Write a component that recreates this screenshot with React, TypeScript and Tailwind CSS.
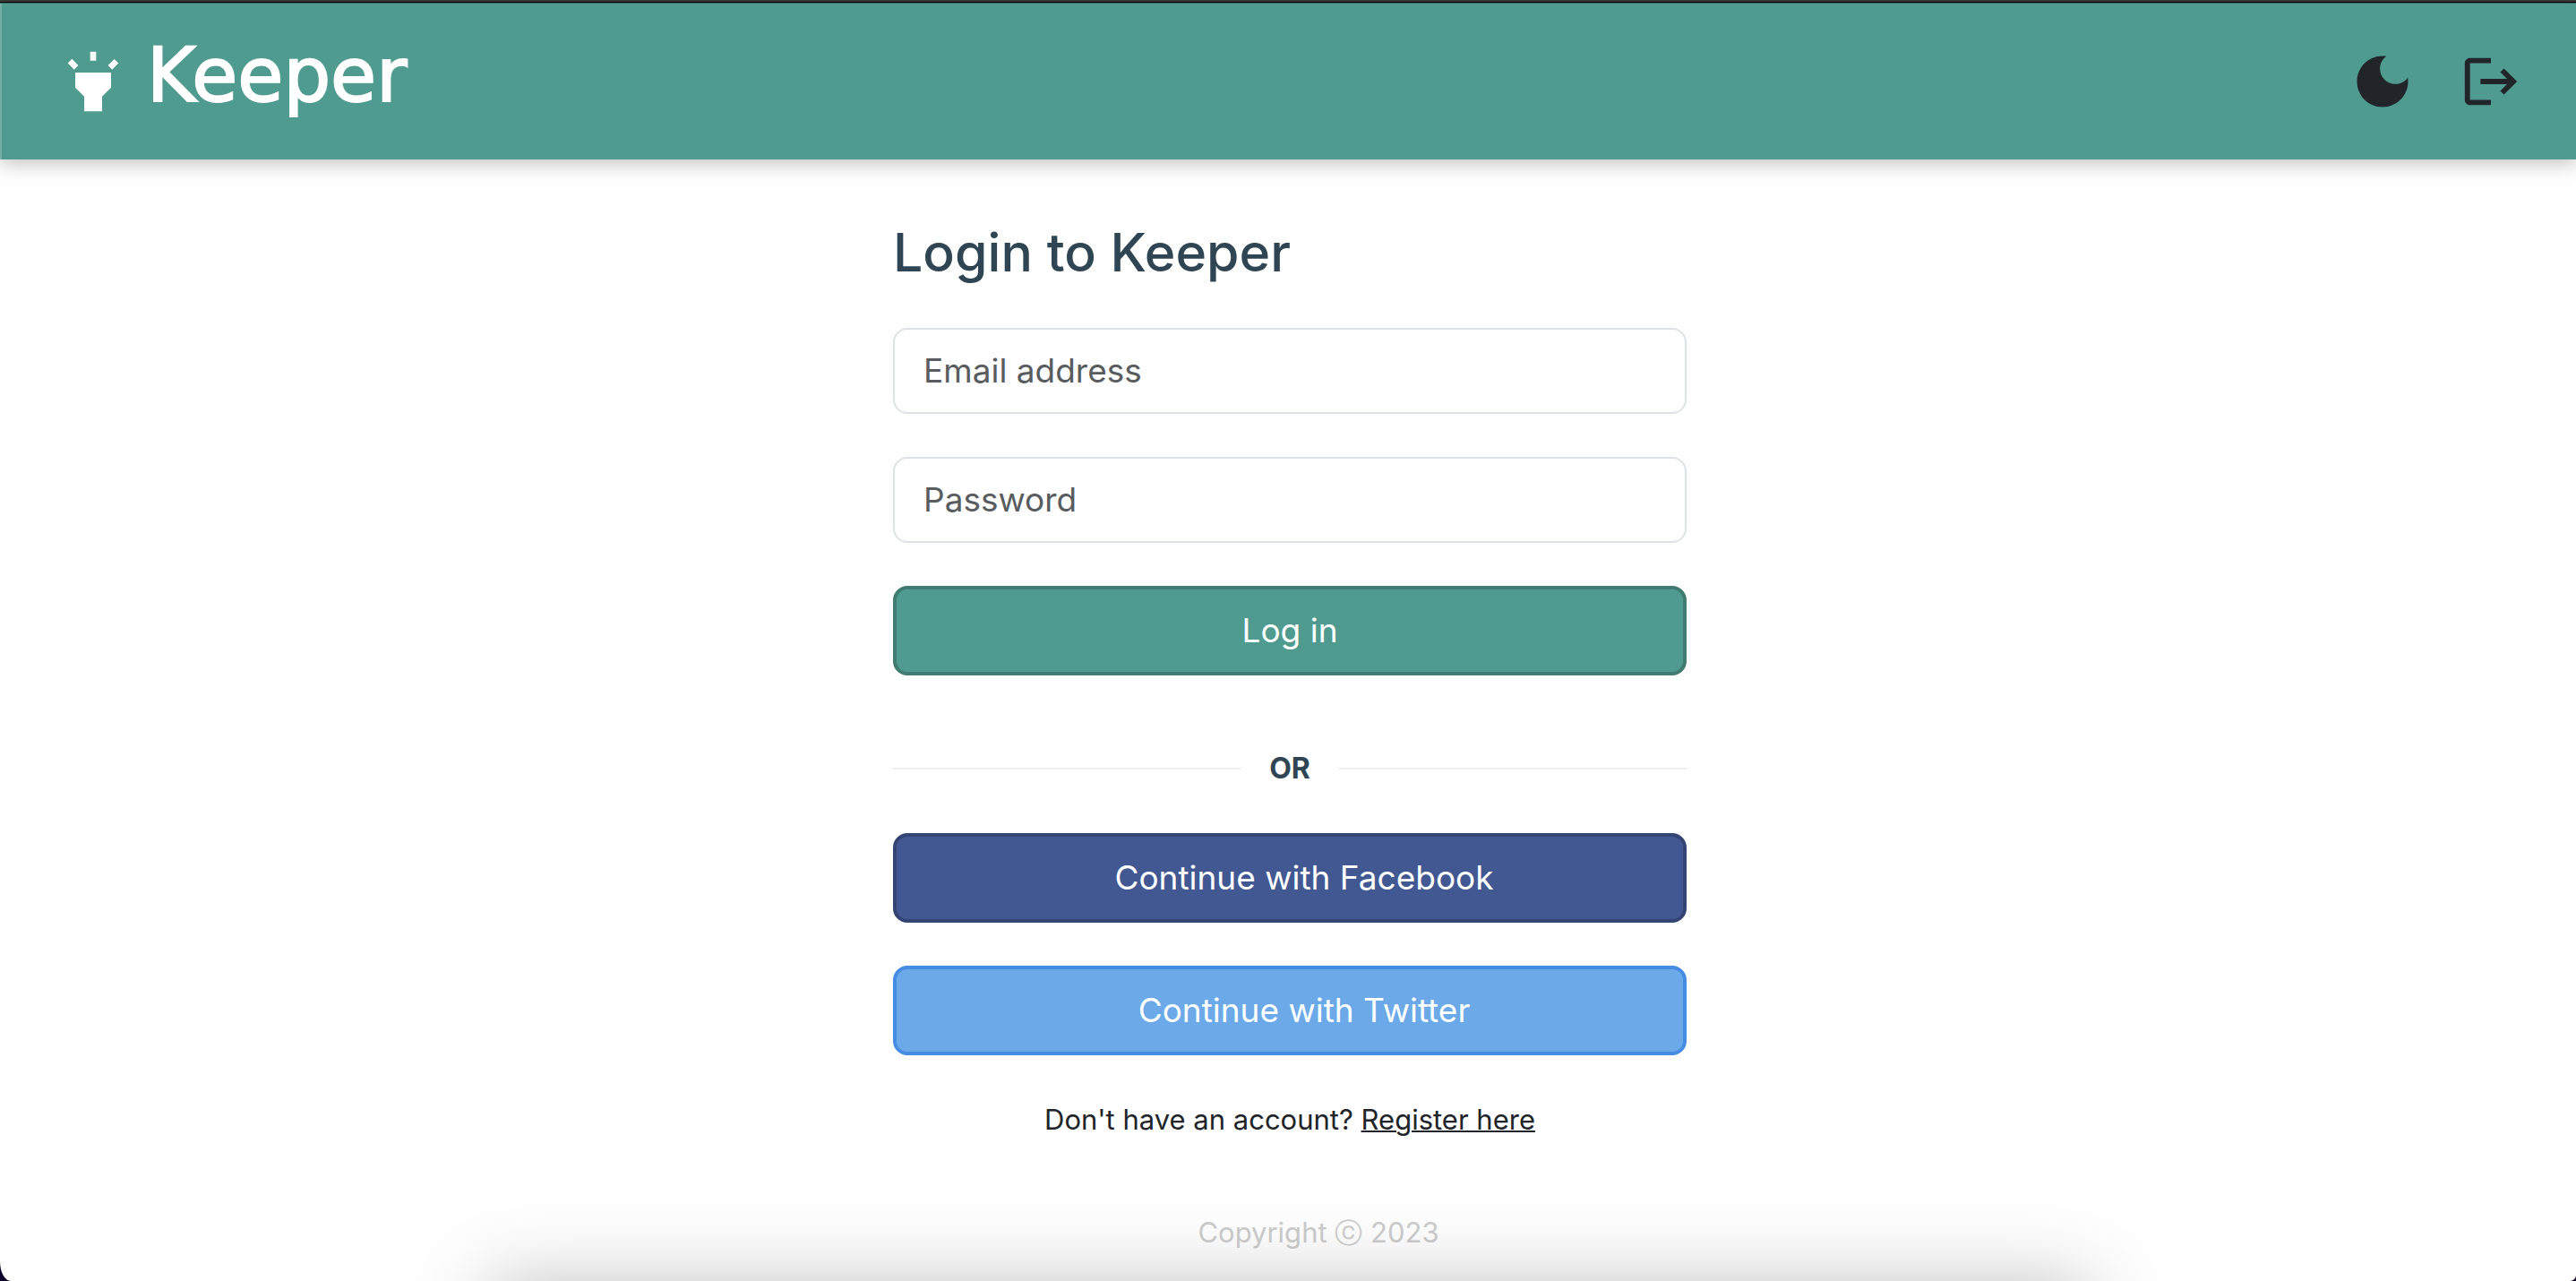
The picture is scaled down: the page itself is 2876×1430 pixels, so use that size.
import React from "react";

type IconProps = { className?: string; path: string };

function Icon({ className, path }: IconProps) {
  return (
    <svg viewBox="0 0 24 24" fill="currentColor" aria-hidden="true" className={className}>
      <path d={path} />
    </svg>
  );
}

const HIGHLIGHT =
  "m6 14 3 3v5h6v-5l3-3V9H6zm5-12h2v3h-2zM3.5 5.875 4.914 4.46l2.12 2.122L5.62 7.997zm13.46.71 2.123-2.12 1.414 1.414L18.375 8z";
const MOON =
  "M12 3c-4.97 0-9 4.03-9 9s4.03 9 9 9 9-4.03 9-9c0-.46-.04-.92-.1-1.36-.98 1.37-2.58 2.26-4.4 2.26-2.98 0-5.4-2.42-5.4-5.4 0-1.81.89-3.42 2.26-4.4-.44-.06-.9-.1-1.36-.1z";
const LOGOUT =
  "m17 7-1.41 1.41L18.17 11H8v2h10.17l-2.58 2.58L17 17l5-5zM4 5h8V3H4c-1.1 0-2 .9-2 2v14c0 1.1.9 2 2 2h8v-2H4z";

function Header() {
  return (
    <header className="flex h-[174px] items-center justify-between border-l-2 border-white/20 bg-[#509b8f] pr-[60px] pl-[62px] shadow-[0_4px_20px_rgba(0,0,0,0.25)]">
      <a href="#home" className="flex items-center gap-5 text-white">
        <Icon path={HIGHLIGHT} className="size-20" />
        <span className="pb-3 font-['DejaVu_Sans',sans-serif] text-[83px] leading-[96px] [-webkit-text-stroke:2px_white]">
          Keeper
        </span>
      </a>
      <div className="flex items-center gap-12 text-[#212529]">
        <button type="button" aria-label="Dark mode">
          <Icon path={MOON} className="size-[76px]" />
        </button>
        <button type="button" aria-label="Log out">
          <Icon path={LOGOUT} className="size-[70px]" />
        </button>
      </div>
    </header>
  );
}

function TextField({ id, type, label }: { id: string; type: string; label: string }) {
  return (
    <div className="relative mb-12">
      <input
        id={id}
        type={type}
        placeholder=" "
        className="peer block h-24 w-full rounded-2xl border-2 border-[#dee2e6] bg-[#fefefe] px-8 text-[37px]"
      />
      <label
        htmlFor={id}
        className="pointer-events-none absolute inset-y-0 left-[34px] hidden items-center text-[37px] text-[#595c5f] peer-placeholder-shown:flex"
      >
        {label}
      </label>
    </div>
  );
}

const buttonBase = "block h-[100px] w-full rounded-2xl border-4 text-[37px] text-white";

export default function App() {
  return (
    <div className="relative min-h-screen overflow-hidden bg-[#0c0028] font-['Inter',sans-serif] text-[#212529]">
      <div className="flex min-h-screen flex-col overflow-hidden rounded-br-[7px_6px] rounded-bl-[12px_22px] bg-[#fefefe]">
        <div className="h-[3px] border-b border-black bg-[#3a3a3a]" />
        <div className="h-px bg-[#3c746b]" />
        <Header />

        <div className="flex flex-1 flex-col pl-1">
          <main className="mx-auto w-full max-w-[886px] flex-1 pt-16">
            <form onSubmit={(e) => e.preventDefault()}>
              <h1 className="mb-[44px] text-[59px] leading-[80px] font-medium text-[#2f4553]">
                Login to Keeper
              </h1>
              <TextField id="email" type="email" label="Email address" />
              <TextField id="password" type="password" label="Password" />
              <button type="submit" className={`${buttonBase} border-[#407c72] bg-[#509b8f]`}>
                Log in
              </button>

              <div className="mt-20 mb-12 flex h-12 items-center gap-8">
                <span className="h-0.5 flex-1 bg-[#eeeeee]" />
                <span className="text-[32px] leading-12 font-bold text-[#2f4553]">OR</span>
                <span className="h-0.5 flex-1 bg-[#eeeeee]" />
              </div>

              <button type="button" className={`${buttonBase} mb-12 border-[#344575] bg-[#425892] pl-8`}>
                Continue with Facebook
              </button>
              <button type="button" className={`${buttonBase} border-[#448de2] bg-[#6ba9e9] pl-8`}>
                Continue with Twitter
              </button>

              <p className="mt-12 text-center text-[31px] leading-12">
                Don't have an account?{" "}
                <a href="#register" className="underline decoration-2">
                  Register here
                </a>
              </p>
            </form>
          </main>

          <footer className="pb-[30px] pl-16 text-center text-[31px] leading-12 text-[#cccccc]">
            Copyright ⓒ 2023
          </footer>
        </div>
      </div>
      <div className="pointer-events-none absolute inset-x-[19%] top-full h-60 shadow-[0_4px_84px_rgba(0,0,0,0.25)]" />
    </div>
  );
}
